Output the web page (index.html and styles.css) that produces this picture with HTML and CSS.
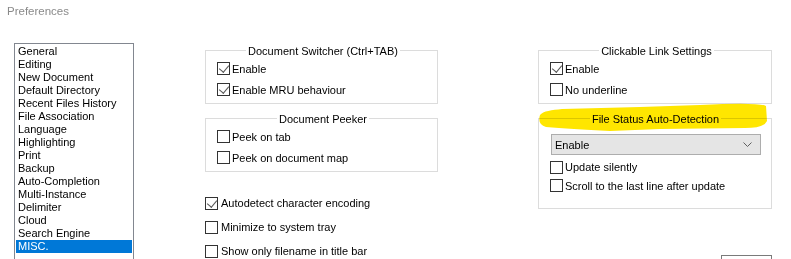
FILE: index.html
```html
<!DOCTYPE html>
<html lang="en">
<head>
    <meta charset="UTF-8">
    <title>Preferences</title>
    <link rel="stylesheet" href="styles.css">
</head>
<body>
    <div class="title">Preferences</div>

    <div class="main">
        <ul class="list">
            <li>General</li>
            <li>Editing</li>
            <li>New Document</li>
            <li>Default Directory</li>
            <li>Recent Files History</li>
            <li>File Association</li>
            <li>Language</li>
            <li>Highlighting</li>
            <li>Print</li>
            <li>Backup</li>
            <li>Auto-Completion</li>
            <li>Multi-Instance</li>
            <li>Delimiter</li>
            <li>Cloud</li>
            <li>Search Engine</li>
            <li class="selected">MISC.</li>
        </ul>

        <div class="col col-mid">
            <div class="group">
                <div class="group-title"><span>Document Switcher (Ctrl+TAB)</span></div>
                <label class="check"><span class="box on"></span>Enable</label>
                <label class="check"><span class="box on"></span>Enable MRU behaviour</label>
            </div>
            <div class="group second">
                <div class="group-title"><span>Document Peeker</span></div>
                <label class="check"><span class="box"></span>Peek on tab</label>
                <label class="check"><span class="box"></span>Peek on document map</label>
            </div>
            <div class="loose">
                <label class="check"><span class="box on"></span>Autodetect character encoding</label>
                <label class="check"><span class="box"></span>Minimize to system tray</label>
                <label class="check"><span class="box"></span>Show only filename in title bar</label>
            </div>
        </div>

        <div class="col col-right">
            <div class="group">
                <div class="group-title"><span>Clickable Link Settings</span></div>
                <label class="check"><span class="box on"></span>Enable</label>
                <label class="check"><span class="box"></span>No underline</label>
            </div>
            <div class="group second detect">
                <div class="group-title"><span>File Status Auto-Detection</span></div>
                <div class="combo">
                    <span>Enable</span>
                    <svg width="9" height="6" viewBox="0 0 9 6"><path d="M0.5 0.5 L4.5 4.5 L8.5 0.5" fill="none" stroke="#606060" stroke-width="1"/></svg>
                </div>
                <label class="check small"><span class="box"></span>Update silently</label>
                <label class="check small"><span class="box"></span>Scroll to the last line after update</label>
            </div>
            <div class="button"></div>
        </div>
    </div>

    <!-- marker stroke drawn over the dialog -->
    <svg class="marker" width="240" height="34" viewBox="530 100 240 34">
        <path d="M540 115 C543 111 552 110 562 109 L640 107 L700 105 Q758 102 766 106 L767 121 Q764 128 745 128 L660 129 L610 131 Q570 129 546 127 Q537 124 540 115 Z" fill="#ffe600"/>
    </svg>
</body>
</html>
```

FILE: styles.css
```css
* {
    box-sizing: border-box;
}
body {
    margin: 0;
    background: #fff;
    color: #000;
    font-family: "Liberation Sans", Arial, sans-serif;
    font-size: 11px;
    width: 791px;
    height: 259px;
    overflow: hidden;
    position: relative;
}
.title {
    padding: 4px 0 0 7px;
    height: 43px;
    color: #8a8a8a;
    font-size: 11.5px;
    line-height: 14px;
}
.main {
    display: flex;
    align-items: flex-start;
    padding-left: 14px;
}
.list {
    list-style: none;
    margin: 0;
    padding: 1px 1px 0;
    width: 120px;
    height: 240px;
    border: 1px solid #828790;
    font-size: 11px;
}
.list li {
    height: 13px;
    line-height: 13px;
    padding-left: 2px;
}
.list li.selected {
    background: #0078d7;
    color: #fff;
}
.col {
    padding-top: 7px;
}
.col-mid {
    margin-left: 71px;
    width: 233px;
}
.col-right {
    margin-left: 100px;
    width: 234px;
}
.group {
    border: 1px solid #dcdcdc;
    padding: 0 8px 3px 11px;
}
.group.second {
    margin-top: 14px;
}
.group-title {
    margin-top: -7px;
    margin-bottom: 0;
    line-height: 14px;
    height: 14px;
    text-align: center;
}
.group-title span {
    background: #fff;
    padding: 0 2px;
}
.check {
    display: flex;
    align-items: center;
    height: 21px;
    line-height: 14px;
}
.check.small {
    height: 18px;
}
.box {
    width: 13px;
    height: 13px;
    border: 1px solid #333;
    background: #fff;
    margin-right: 2px;
    flex: none;
    position: relative;
}
.box.on::after {
    content: "";
    position: absolute;
    left: 3px;
    top: 0px;
    width: 5px;
    height: 8px;
    border: solid #5a5a5a;
    border-width: 0 1px 1px 0;
    transform: rotate(40deg);
}
.loose {
    margin-top: 19px;
}
.loose .check {
    height: 24px;
}
.loose .box {
    margin-right: 3px;
}
.detect {
    padding-bottom: 13px;
    padding-right: 10px;
}
.detect .group-title {
    margin-bottom: 8px;
}
.combo {
    display: flex;
    justify-content: space-between;
    align-items: center;
    height: 21px;
    margin: 0 0 3px 1px;
    padding: 0 8px 0 3px;
    background: #e5e5e5;
    border: 1px solid #adadad;
}
.detect .check.small + .check.small {
    height: 19px;
}
.button {
    margin: 46px 0 0 183px;
    width: 51px;
    height: 22px;
    border: 1px solid #7a7a7a;
}
.marker {
    position: absolute;
    left: 530px;
    top: 100px;
    mix-blend-mode: multiply;
}
```
